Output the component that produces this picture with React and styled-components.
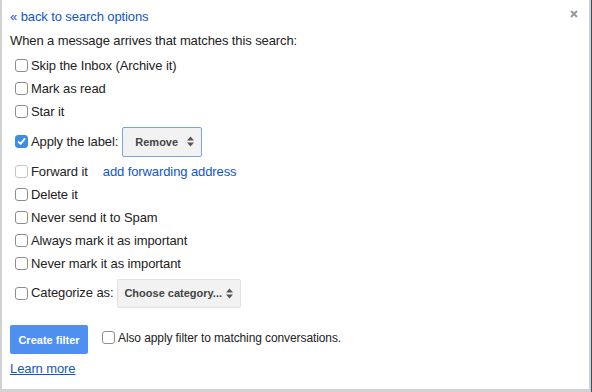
import React from "react";
import styled, { createGlobalStyle } from "styled-components";

const Global = createGlobalStyle`
  html, body { margin: 0; padding: 0; }
  body {
    width: 592px; height: 392px; overflow: hidden;
    background: #d2d2d2;
    font-family: "Liberation Sans", Arial, sans-serif;
    font-size: 13px; color: #222;
    letter-spacing: -0.1px;
  }
`;

const Frame = styled.div`
  width: 591px; height: 392px;
  border-right: 1px solid #3e4d63;
  display: flex;
`;

const Panel = styled.div`
  position: relative;
  margin-left: 2px;
  width: 587px; height: 389px;
  background: #fff;
  padding: 8px 0 0 8px;
  box-sizing: border-box;
  display: flex; flex-direction: column;
`;

const Link = styled.a`
  color: #1155cc;
  text-decoration: ${p => (p.$underline ? "underline" : "none")};
  cursor: pointer;
  line-height: 18px;
  margin-left: ${p => p.$ml || 0}px;
`;

const Line = styled.div`
  line-height: 18px;
  margin-top: ${p => p.$mt || 0}px;
`;

const Row = styled.div`
  display: flex; align-items: center;
  height: ${p => p.$h || 23}px;
  padding-left: 5px;
`;

const Box = styled.span`
  width: 13px; height: 13px; box-sizing: border-box;
  border: 1px solid ${p => (p.$disabled ? "#c4c4c4" : "#8e8e8e")};
  border-radius: 3px;
  background: ${p => (p.$checked ? "#3d8de6" : "#fff")};
  border-color: ${p => (p.$checked ? "#3d8de6" : undefined)};
  display: inline-flex; align-items: center; justify-content: center;
  margin-right: 3px; flex: none;
`;

const Label = styled.span`
  line-height: 18px;
  white-space: nowrap;
  font-size: ${p => p.$size || 13}px;
`;

const Select = styled.div`
  display: flex; align-items: center; justify-content: space-between;
  box-sizing: border-box;
  width: ${p => p.$w}px; height: ${p => p.$h}px;
  margin-left: 4px;
  padding: 0 7px 0 ${p => p.$pl}px;
  background: #f2f2f2;
  border: 1px solid ${p => (p.$focus ? "#79a4e0" : "#e1e1e1")};
  border-radius: 2px;
  font-size: 11px; font-weight: bold; color: #444;
  letter-spacing: 0;
`;

const Bottom = styled.div`
  display: flex; align-items: flex-start;
  margin-top: 14px;
`;

const Button = styled.button`
  width: 78px; height: 29px;
  border: none; border-radius: 2px;
  background: #4f8ff0;
  color: #fff; font-family: inherit;
  font-size: 11px; font-weight: bold;
  padding: 0; margin-right: 14px;
`;

const AlsoLabel = styled.label`
  display: flex; align-items: center;
  height: 25px;
`;

const Close = styled.div`
  position: absolute; top: 10px; right: 11px;
  width: 8px; height: 8px; line-height: 0;
`;

const Check = () => (
  <svg width="9" height="9" viewBox="0 0 9 9">
    <path d="M1.5 4.8 L3.6 6.9 L7.6 1.9" fill="none" stroke="#fff" strokeWidth="1.7" strokeLinecap="round" strokeLinejoin="round" />
  </svg>
);

const Arrows = () => (
  <svg width="7" height="11" viewBox="0 0 7 11">
    <path d="M0 4.5 L3.5 0.5 L7 4.5 Z" fill="#555" />
    <path d="M0 6.5 L3.5 10.5 L7 6.5 Z" fill="#555" />
  </svg>
);

const CheckRow = ({ children, checked, disabled, h }) => (
  <Row $h={h}>
    <Box $checked={checked} $disabled={disabled}>{checked && <Check />}</Box>
    {children}
  </Row>
);

export default function App() {
  return (
    <>
      <Global />
      <Frame>
        <Panel>
          <Close>
            <svg width="8" height="8" viewBox="0 0 8 8">
              <path d="M1 1 L7 7 M7 1 L1 7" stroke="#9a9a9a" strokeWidth="2" />
            </svg>
          </Close>
          <Link>« back to search options</Link>
          <Line $mt={6}>When a message arrives that matches this search:</Line>
          <div style={{ height: 4 }} />
          <CheckRow><Label>Skip the Inbox (Archive it)</Label></CheckRow>
          <CheckRow><Label>Mark as read</Label></CheckRow>
          <CheckRow><Label>Star it</Label></CheckRow>
          <CheckRow checked h={37}>
            <Label>Apply the label:</Label>
            <Select $w={80} $h={30} $pl={12} $focus>
              <span>Remove</span>
              <Arrows />
            </Select>
          </CheckRow>
          <CheckRow disabled>
            <Label>Forward it</Label>
            <Link $ml={15}>add forwarding address</Link>
          </CheckRow>
          <CheckRow><Label>Delete it</Label></CheckRow>
          <CheckRow><Label>Never send it to Spam</Label></CheckRow>
          <CheckRow><Label>Always mark it as important</Label></CheckRow>
          <CheckRow><Label>Never mark it as important</Label></CheckRow>
          <CheckRow h={36}>
            <Label>Categorize as:</Label>
            <Select $w={124} $h={29} $pl={6}>
              <span>Choose category...</span>
              <Arrows />
            </Select>
          </CheckRow>
          <Bottom>
            <Button>Create filter</Button>
            <AlsoLabel>
              <Box />
              <Label $size={12}>Also apply filter to matching conversations.</Label>
            </AlsoLabel>
          </Bottom>
          <Line $mt={6}><Link $underline>Learn more</Link></Line>
        </Panel>
      </Frame>
    </>
  );
}
